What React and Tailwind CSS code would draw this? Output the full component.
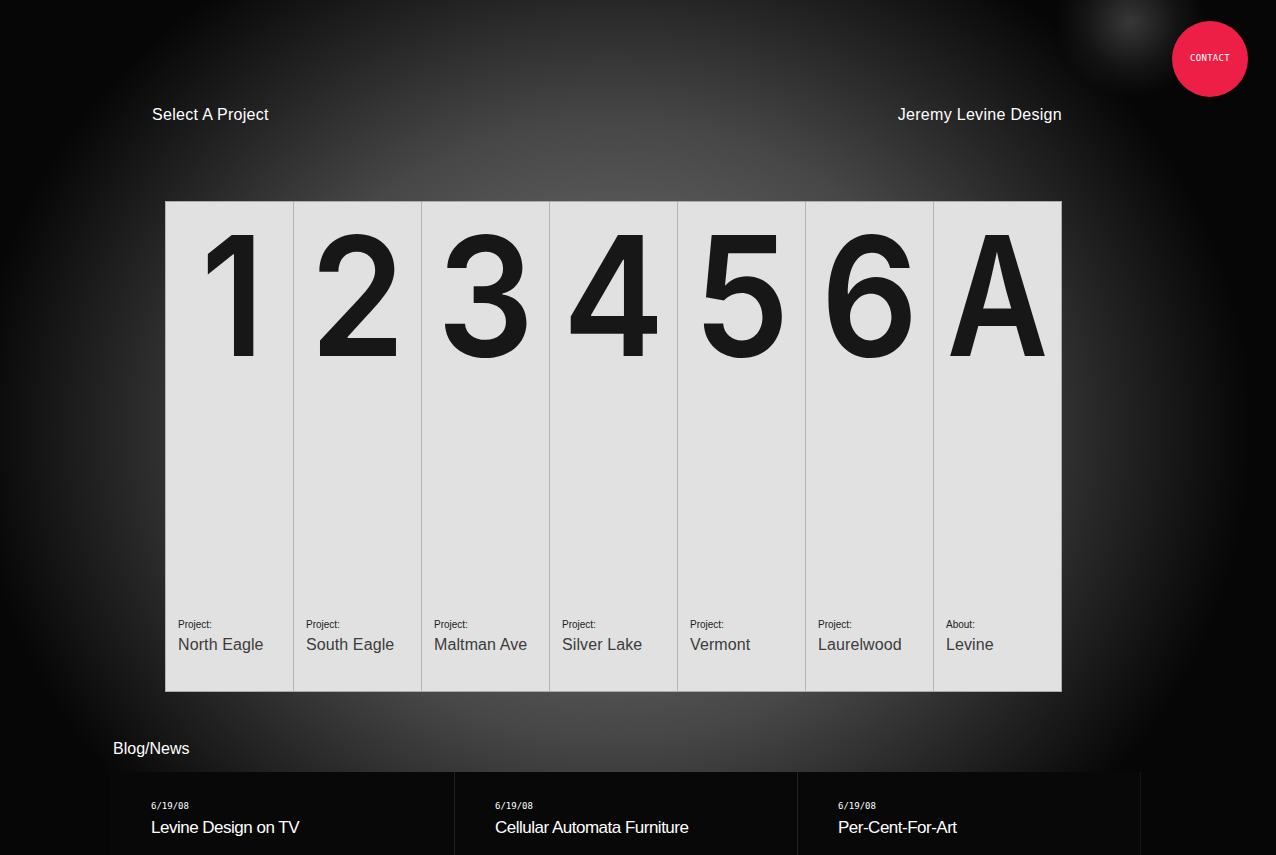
export default function App() {
  const columns = [
    { big: '1', label: 'Project:', name: 'North Eagle', fit: 'scale-x-[0.9] translate-x-[3px]' },
    { big: '2', label: 'Project:', name: 'South Eagle', fit: 'scale-x-[0.92]' },
    { big: '3', label: 'Project:', name: 'Maltman Ave', fit: 'scale-x-[0.92]' },
    { big: '4', label: 'Project:', name: 'Silver Lake', fit: 'scale-x-[0.92]' },
    { big: '5', label: 'Project:', name: 'Vermont', fit: 'scale-x-[0.92]' },
    { big: '6', label: 'Project:', name: 'Laurelwood', fit: 'scale-x-[0.92]' },
    { big: 'A', label: 'About:', name: 'Levine', fit: 'scale-x-[0.84]' },
  ];

  const posts = [
    { date: '6/19/08', title: 'Levine Design on TV' },
    { date: '6/19/08', title: 'Cellular Automata Furniture' },
    { date: '6/19/08', title: 'Per-Cent-For-Art' },
  ];

  return (
    <div className="relative w-full h-[855px] overflow-hidden bg-black font-['Liberation_Sans',Arial,sans-serif] bg-[radial-gradient(circle_75px_at_1130px_22px,rgba(255,255,255,0.2),rgba(255,255,255,0.06)_60%,transparent),radial-gradient(ellipse_640px_560px_at_612px_430px,#717171_0%,#616161_28%,#474747_55%,#252525_78%,#060606_100%)]">
      {/* contact bubble */}
      <div className="absolute top-[21px] left-[1172px] w-[76px] h-[76px] rounded-full bg-[#ee1f47] flex items-center justify-center">
        <span className="text-white text-[9px] tracking-[0.3px] font-['DejaVu_Sans_Mono',monospace]">CONTACT</span>
      </div>

      {/* header */}
      <div className="pt-[105px] ml-[152px] w-[910px] flex justify-between text-white text-[16px] leading-[20px] tracking-[0.3px]">
        <span>Select A Project</span>
        <span>Jeremy Levine Design</span>
      </div>

      {/* project strip */}
      <div className="mt-[76px] ml-[165px] w-[897px] h-[491px] flex bg-[#e1e1e1] border-t border-b border-r border-[#ababab]">
        {columns.map((c) => (
          <div key={c.big} className="w-[128px] h-full border-l border-[#b4b4b4] flex flex-col">
            <div className={`pt-[11px] text-center text-[#171717] text-[166px] leading-none font-['Inter',sans-serif] font-semibold ${c.fit}`}>
              {c.big}
            </div>
            <div className="mt-auto pl-[12px] pb-[36px]">
              <div className="text-[10px] leading-[12px] text-[#222]">{c.label}</div>
              <div className="mt-[4px] text-[16px] leading-[20px] text-[#3c3c3c] tracking-[0.1px]">{c.name}</div>
            </div>
          </div>
        ))}
      </div>

      {/* blog */}
      <div className="mt-[47px] ml-[113px] text-white text-[16px] leading-[20px]">Blog/News</div>
      <div className="mt-[13px] ml-[111px] h-[90px] flex">
        {posts.map((p, i) => (
          <div key={p.title} className={`w-[343px] h-full pl-[40px] pt-[28px] bg-[#080808] ${i > 0 ? 'border-l border-[#222]' : ''}`}>
            <div className="text-white text-[9px] leading-[12px] font-['DejaVu_Sans_Mono',monospace]">{p.date}</div>
            <div className="mt-[5px] text-white text-[17px] leading-[22px] tracking-[-0.5px]">{p.title}</div>
          </div>
        ))}
        <div className="w-[40px] h-full border-l border-[#141414] bg-[linear-gradient(90deg,#060606,transparent)]" />
      </div>
    </div>
  );
}
